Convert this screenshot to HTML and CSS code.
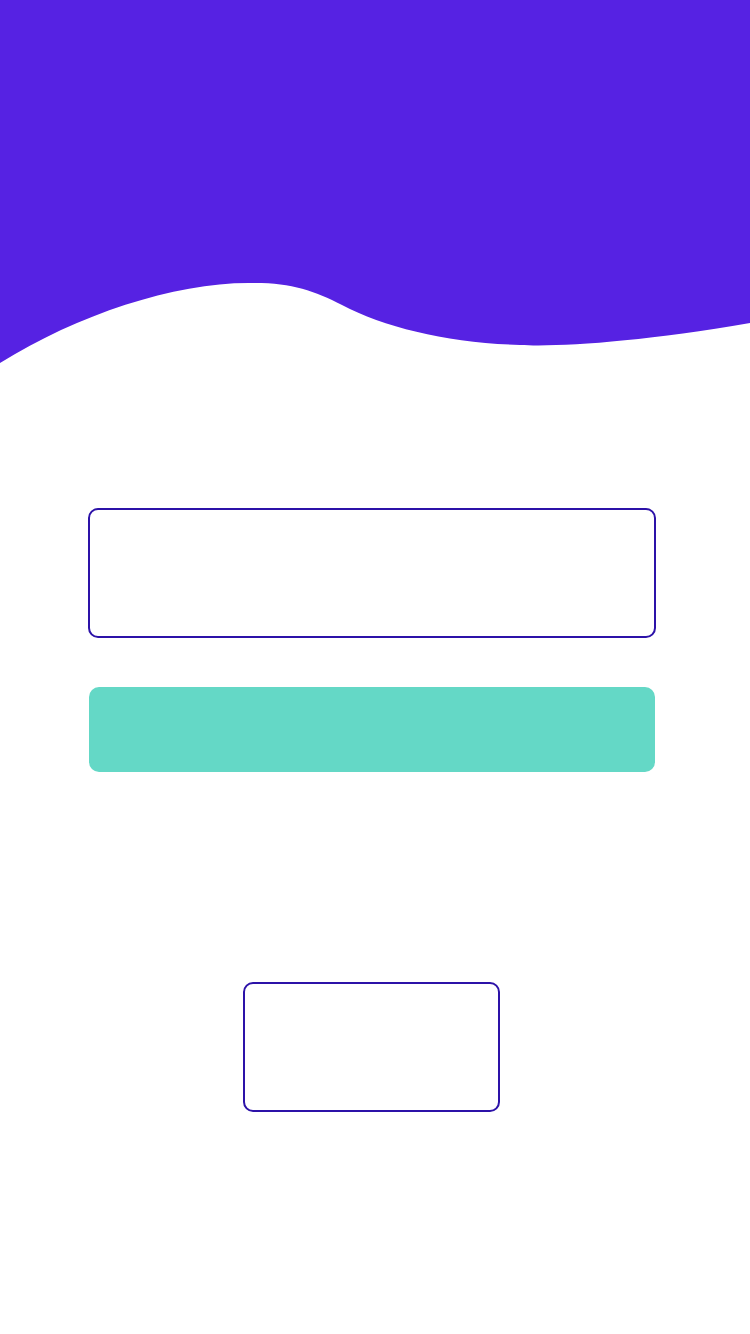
FILE: index.html
```html
<!DOCTYPE html>
<html>
<head>
<meta charset="utf-8">
<link rel="stylesheet" href="styles.css">
</head>
<body>
<div class="page">
  <header class="hero">
    <svg class="wave" viewBox="0 0 750 366" width="750" height="366" preserveAspectRatio="none">
      <path d="M0,0 L750,0 L750,323 C640,342 560,347 520,345 C450,343 385,328 342,305 C315,291 292,283 255,283 C180,281 80,313 0,363 Z" fill="#5622e3"/>
    </svg>
  </header>
  <main class="content">
    <div class="field"></div>
    <div class="button"></div>
    <div class="small-box"></div>
  </main>
</div>
</body>
</html>
```
FILE: styles.css
```css
html, body {
  margin: 0;
  padding: 0;
  background: #ffffff;
  font-family: "Liberation Sans", Arial, sans-serif;
}
.page {
  width: 750px;
  min-height: 1334px;
  display: flex;
  flex-direction: column;
}
.hero {
  height: 366px;
}
.wave {
  display: block;
}
.content {
  display: flex;
  flex-direction: column;
  padding-top: 142px;
  padding-left: 88px;
}
.field {
  box-sizing: border-box;
  width: 568px;
  height: 130px;
  border: 2px solid #2c12a8;
  border-radius: 10px;
}
.button {
  margin-top: 49px;
  margin-left: 1px;
  width: 566px;
  height: 85px;
  background: #64d8c6;
  border-radius: 10px;
}
.small-box {
  box-sizing: border-box;
  margin-top: 210px;
  margin-left: 155px;
  width: 257px;
  height: 130px;
  border: 2px solid #2c12a8;
  border-radius: 10px;
}
```
